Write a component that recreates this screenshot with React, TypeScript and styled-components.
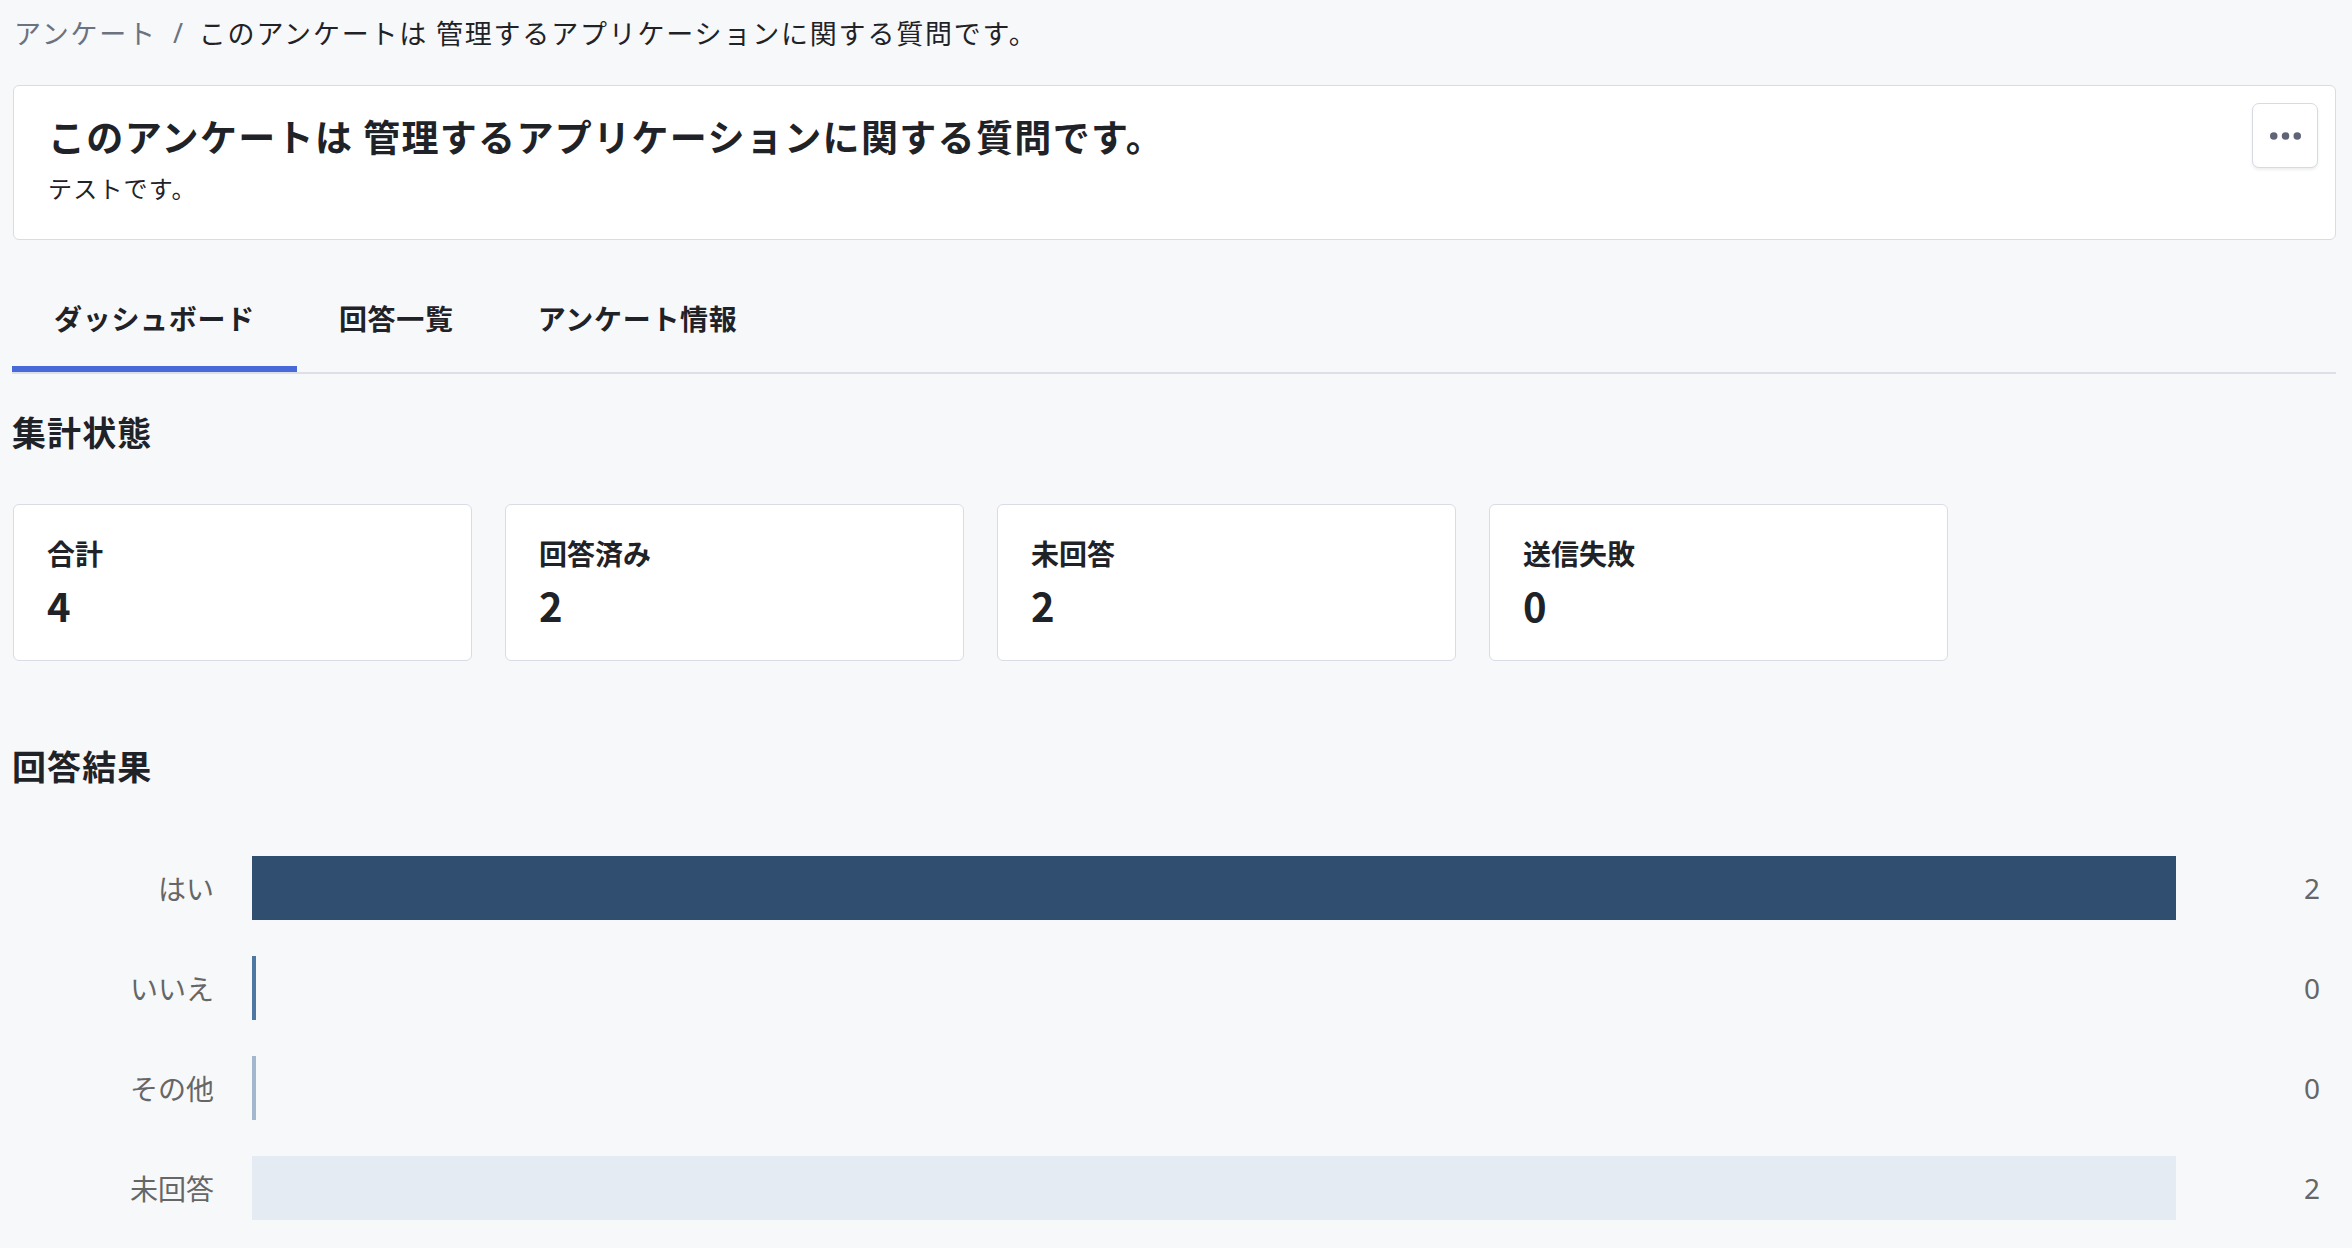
import React from "react";
import styled, { createGlobalStyle, css } from "styled-components";

const GlobalStyle = createGlobalStyle`
  html, body {
    margin: 0;
    background: #f7f8fa;
  }
  body {
    font-family: "Noto Sans CJK JP", "Noto Sans", sans-serif;
    color: #1f2328;
  }
`;

const stats = [
  { label: "合計", value: 4 },
  { label: "回答済み", value: 2 },
  { label: "未回答", value: 2 },
  { label: "送信失敗", value: 0 },
];

const results = [
  { label: "はい", count: 2, color: "#2f4e70" },
  { label: "いいえ", count: 0, color: "#4f77a3" },
  { label: "その他", count: 0, color: "#a3b7cf" },
  { label: "未回答", count: 2, color: "#e4ebf2" },
];

const tabs = ["ダッシュボード", "回答一覧", "アンケート情報"];

const TITLE = "このアンケートは 管理するアプリケーションに関する質問です。";

export default function App() {
  const max = Math.max(...results.map((r) => r.count));

  return (
    <>
      <GlobalStyle />
      <Page>
        <Breadcrumb>
          <CrumbLink>アンケート</CrumbLink>
          <CrumbSep>/</CrumbSep>
          <CrumbCurrent>{TITLE}</CrumbCurrent>
        </Breadcrumb>

        <HeaderCard>
          <HeaderText>
            <Title>{TITLE}</Title>
            <Description>テストです。</Description>
          </HeaderText>
          <MenuButton aria-label="メニュー">
            <svg width="31" height="8" viewBox="0 0 31 8">
              <circle cx="3.75" cy="4" r="3.75" fill="#5f6577" />
              <circle cx="15.5" cy="4" r="3.75" fill="#5f6577" />
              <circle cx="27.25" cy="4" r="3.75" fill="#5f6577" />
            </svg>
          </MenuButton>
        </HeaderCard>

        <TabList>
          {tabs.map((t, i) => (
            <Tab key={t} active={i === 0}>
              {t}
            </Tab>
          ))}
        </TabList>

        <SectionTitle>集計状態</SectionTitle>
        <StatGrid>
          {stats.map((s) => (
            <StatCard key={s.label}>
              <StatLabel>{s.label}</StatLabel>
              <StatValue>{s.value}</StatValue>
            </StatCard>
          ))}
        </StatGrid>

        <ResultTitle>回答結果</ResultTitle>
        <Chart>
          {results.map((r) => (
            <ChartRow key={r.label}>
              <BarLabel>{r.label}</BarLabel>
              <BarTrack>
                <Bar
                  color={r.color}
                  style={{
                    width: r.count === 0 ? "4px" : `${(r.count / max) * 100}%`,
                  }}
                />
              </BarTrack>
              <BarValue>{r.count}</BarValue>
            </ChartRow>
          ))}
        </Chart>
      </Page>
    </>
  );
}

const Page = styled.div`
  min-height: 100vh;
  box-sizing: border-box;
  padding: 13px 16px 24px 12px;
`;

const Breadcrumb = styled.nav`
  display: flex;
  align-items: center;
  font-size: 27px;
  line-height: 40px;
  letter-spacing: 1.8px;
  margin-bottom: 32px;
  white-space: nowrap;
`;

const CrumbLink = styled.span`
  color: #6b7280;
  margin-left: 2px;
`;

const CrumbSep = styled.span`
  color: #6b7280;
  font-family: "Noto Sans", sans-serif;
  margin: 0 14px 0 16px;
`;

const CrumbCurrent = styled.span`
  color: #1f2328;
`;

const HeaderCard = styled.section`
  display: flex;
  align-items: flex-start;
  background: #fff;
  border: 1px solid #d9dce5;
  border-radius: 6px;
  padding: 17px 17px 33px 34px;
  margin-left: 1px;
`;

const HeaderText = styled.div`
  flex: 1;
  margin-top: 7px;
`;

const Title = styled.h1`
  margin: 0;
  font-size: 37px;
  line-height: 52px;
  letter-spacing: 1.35px;
  font-weight: 700;
  color: #1f2328;
`;

const Description = styled.p`
  margin: 8px 0 0;
  font-size: 24px;
  line-height: 36px;
  letter-spacing: 1.2px;
  color: #1f2328;
`;

const MenuButton = styled.button`
  display: flex;
  align-items: center;
  justify-content: center;
  width: 66px;
  height: 65px;
  padding: 0;
  background: #fff;
  border: 1px solid #d6dae3;
  border-radius: 7px;
  box-shadow: 0 2px 3px rgba(30, 40, 70, 0.08);
  cursor: pointer;
`;

const TabList = styled.div`
  display: flex;
  margin-top: 34px;
  border-bottom: 2px solid #dcdfe5;
`;

const Tab = styled.div<{ active?: boolean }>`
  padding: 24px 42px 28px;
  font-size: 28px;
  line-height: 40px;
  letter-spacing: 0.7px;
  font-weight: 700;
  color: #1f2328;
  border-bottom: 6px solid transparent;
  ${({ active }) =>
    active &&
    css`
      border-bottom-color: #4a69d9;
    `}
`;

const SectionTitle = styled.h2`
  margin: 34px 0 0;
  font-size: 34px;
  line-height: 48px;
  letter-spacing: 1.1px;
  font-weight: 700;
  color: #1f2328;
`;

const ResultTitle = styled(SectionTitle)`
  margin-top: 81px;
`;

const StatGrid = styled.div`
  display: grid;
  grid-template-columns: repeat(4, 459px);
  gap: 33px;
  margin-top: 48px;
  margin-left: 1px;
`;

const StatCard = styled.div`
  background: #fff;
  border: 1px solid #d9dce5;
  border-radius: 6px;
  padding: 28px 33px 31px;
`;

const StatLabel = styled.div`
  font-size: 28px;
  line-height: 40px;
  font-weight: 700;
  color: #1f2328;
`;

const StatValue = styled.div`
  margin-top: 8px;
  font-size: 40px;
  line-height: 48px;
  font-weight: 700;
  color: #1f2328;
`;

const Chart = styled.div`
  display: flex;
  flex-direction: column;
  gap: 36px;
  margin-top: 66px;
`;

const ChartRow = styled.div`
  display: grid;
  grid-template-columns: 202px 1924px auto;
  column-gap: 38px;
  align-items: center;
  height: 64px;
`;

const BarLabel = styled.div`
  text-align: right;
  font-size: 28px;
  line-height: 40px;
  color: #666;
`;

const BarTrack = styled.div`
  height: 64px;
  display: flex;
`;

const Bar = styled.div<{ color: string }>`
  height: 100%;
  background: ${({ color }) => color};
`;

const BarValue = styled.div`
  margin-left: 90px;
  font-family: "Noto Sans", "Noto Sans CJK JP", sans-serif;
  font-size: 28px;
  line-height: 40px;
  color: #666;
`;
